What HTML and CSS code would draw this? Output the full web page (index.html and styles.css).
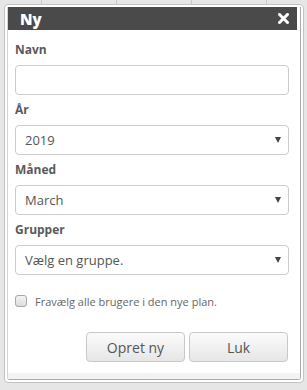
FILE: index.html
```html
<!DOCTYPE html>
<html lang="da">
<head>
  <meta charset="UTF-8" />
  <meta name="viewport" content="width=device-width, initial-scale=1.0" />
  <title>Ny plan</title>
  <link rel="stylesheet" href="styles.css">
</head>
<body>
  <div class="bg-strip">
    <div class="bg-cell first"></div>
    <div class="bg-cell"></div>
    <div class="bg-cell"></div>
    <div class="bg-cell"></div>
    <div class="bg-cell"></div>
  </div>

  <div class="dialog">
    <div class="panel">
      <div class="titlebar">
        <span class="title">Ny</span>
        <svg class="close" width="11" height="11" viewBox="0 0 11 11">
          <path d="M1.5 1.5 L9.5 9.5 M9.5 1.5 L1.5 9.5" stroke="#fff" stroke-width="3" stroke-linecap="square" />
        </svg>
      </div>

      <div class="dialog-body">
        <label class="field-label">Navn</label>
        <div class="field"></div>

        <label class="field-label">År</label>
        <div class="field select"><span>2019</span><i class="arrow"></i></div>

        <label class="field-label">Måned</label>
        <div class="field select"><span>March</span><i class="arrow"></i></div>

        <label class="field-label">Grupper</label>
        <div class="field select"><span>Vælg en gruppe.</span><i class="arrow"></i></div>

        <div class="check-row">
          <span class="checkbox"></span>
          <span>Fravælg alle brugere i den nye plan.</span>
        </div>

        <div class="actions">
          <button class="btn">Opret ny</button>
          <button class="btn">Luk</button>
        </div>
      </div>
      <div class="footer"></div>
    </div>
  </div>
</body>
</html>
```

FILE: styles.css
```css
body {
  margin: 0;
  padding: 0;
  background-color: #e6e6e6;
  font-family: "Open Sans", Arial, sans-serif;
  width: 307px;
  height: 390px;
  overflow: hidden;
}
.bg-strip {
  display: flex;
  height: 4px;
  overflow: hidden;
}
.bg-cell {
  width: 74px;
  border-left: 1px solid #c9c9c9;
  flex-shrink: 0;
}
.bg-cell.first {
  width: 41px;
  border-left: none;
}
.dialog {
  margin: 0 3px 0 4px;
  background: #fff;
  border: 1px solid #c2c2c2;
  border-radius: 4px;
  padding: 2px;
}
.panel {
  border-right: 1px solid #a9a9a9;
  border-bottom: 1px solid #a9a9a9;
  border-left: 1px solid #d6d6d6;
  border-radius: 0 0 3px 3px;
}
.titlebar {
  display: flex;
  align-items: center;
  justify-content: space-between;
  height: 23px;
  background-color: #4a4a4a;
  padding: 0 8px 0 12px;
  margin-right: 3px;
}
.title {
  color: #fff;
  font-weight: 800;
  font-size: 15px;
  margin-top: 1px;
}
.close {
  display: block;
}
.dialog-body {
  padding: 12px 11px 11px 7px;
}
.field-label {
  display: block;
  font-size: 12px;
  font-weight: 700;
  line-height: 16px;
  color: #5a5a5a;
  margin-bottom: 7px;
}
.field {
  box-sizing: border-box;
  height: 30px;
  border: 1px solid #cccccc;
  border-radius: 4px;
  margin-bottom: 7px;
  background: #fff;
}
.select {
  display: flex;
  align-items: center;
  justify-content: space-between;
  padding: 0 7px 0 9px;
  font-size: 13px;
  color: #555;
}
.arrow {
  width: 0;
  height: 0;
  border-left: 3px solid transparent;
  border-right: 3px solid transparent;
  border-top: 6px solid #444;
}
.check-row {
  display: flex;
  align-items: center;
  gap: 8px;
  height: 16px;
  margin-top: 18px;
  font-size: 11px;
  color: #666;
}
.checkbox {
  box-sizing: border-box;
  width: 12px;
  height: 12px;
  border: 1px solid #a8a8a8;
  border-radius: 3px;
  background: linear-gradient(#f4f4f4, #dcdcdc);
}
.actions {
  display: flex;
  justify-content: flex-end;
  gap: 4px;
  margin-top: 23px;
  padding-right: 1px;
}
.btn {
  width: 99px;
  height: 30px;
  border: 1px solid #c8c8c8;
  border-radius: 4px;
  background: linear-gradient(#fbfbfb, #e6e6e6);
  font-family: "Open Sans", Arial, sans-serif;
  font-size: 14px;
  color: #555;
  padding: 0;
}
.footer {
  height: 6px;
  background-color: #f3f3f3;
}
```
